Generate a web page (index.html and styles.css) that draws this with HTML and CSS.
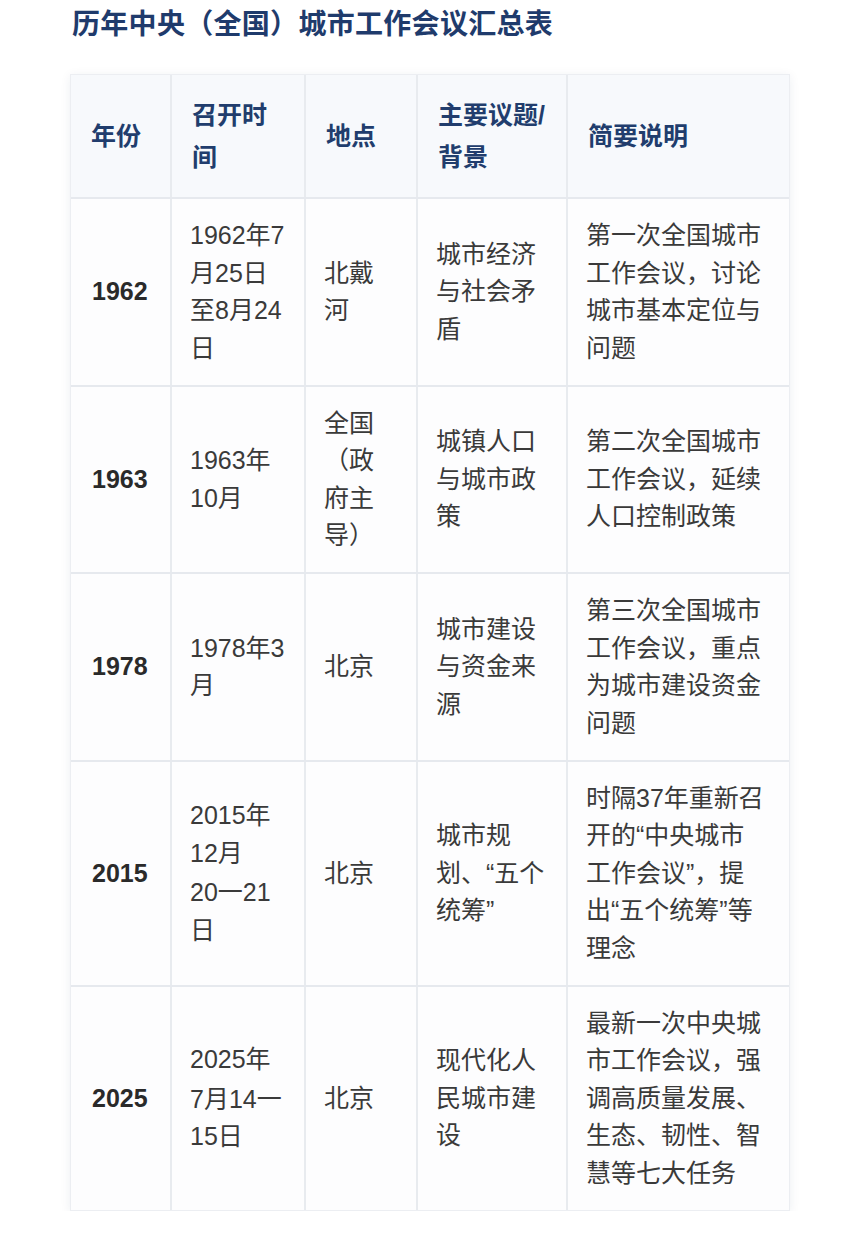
FILE: index.html
```html
<!DOCTYPE html>
<html lang="zh-CN">
<head>
<meta charset="utf-8">
<link rel="stylesheet" href="styles.css">
</head>
<body>
<div class="page">
  <h1 class="title">历年中央（全国）城市工作会议汇总表</h1>
  <div class="card">
    <table class="tbl">
      <colgroup>
        <col class="c1"><col class="c2"><col class="c3"><col class="c4"><col class="c5">
      </colgroup>
      <thead>
        <tr>
          <th>年份</th>
          <th>召开时<br>间</th>
          <th>地点</th>
          <th>主要议题/<br>背景</th>
          <th>简要说明</th>
        </tr>
      </thead>
      <tbody>
        <tr>
          <td class="yr">1962</td>
          <td>1962年7<br>月25日<br>至8月24<br>日</td>
          <td>北戴<br>河</td>
          <td>城市经济<br>与社会矛<br>盾</td>
          <td>第一次全国城市<br>工作会议，讨论<br>城市基本定位与<br>问题</td>
        </tr>
        <tr>
          <td class="yr">1963</td>
          <td>1963年<br>10月</td>
          <td>全国<br>（政<br>府主<br>导）</td>
          <td>城镇人口<br>与城市政<br>策</td>
          <td>第二次全国城市<br>工作会议，延续<br>人口控制政策</td>
        </tr>
        <tr>
          <td class="yr">1978</td>
          <td>1978年3<br>月</td>
          <td>北京</td>
          <td>城市建设<br>与资金来<br>源</td>
          <td>第三次全国城市<br>工作会议，重点<br>为城市建设资金<br>问题</td>
        </tr>
        <tr>
          <td class="yr">2015</td>
          <td>2015年<br>12月<br>20<span class="dash">一</span>21<br>日</td>
          <td>北京</td>
          <td>城市规<br>划、“五个<br>统筹”</td>
          <td>时隔37年重新召<br>开的“中央城市<br>工作会议”，提<br>出“五个统筹”等<br>理念</td>
        </tr>
        <tr>
          <td class="yr">2025</td>
          <td>2025年<br>7月14<span class="dash">一</span><br>15日</td>
          <td>北京</td>
          <td>现代化人<br>民城市建<br>设</td>
          <td>最新一次中央城<br>市工作会议，强<br>调高质量发展、<br>生态、韧性、智<br>慧等七大任务</td>
        </tr>
      </tbody>
    </table>
  </div>
</div>
</body>
</html>
```

FILE: styles.css
```css
html, body {
  margin: 0;
  padding: 0;
  background: #ffffff;
}
body {
  font-family: "Liberation Sans", "Noto Sans CJK SC", sans-serif;
  color: #333333;
}
.page {
  padding: 4px 0 0 70px;
  width: 722px;
}
.title {
  margin: 0 0 0 2px;
  font-family: "Noto Sans CJK SC", sans-serif;
  font-size: 28px;
  line-height: 36px;
  font-weight: 700;
  color: #1f3b6c;
  letter-spacing: 0.3px;
}
.card {
  margin-top: 34px;
  width: 718px;
  box-shadow: 0 2px 10px rgba(30, 50, 90, 0.08);
  border: 1px solid #eceef2;
  background: #fcfdfe;
}
.tbl {
  width: 100%;
  table-layout: fixed;
  border-collapse: collapse;
}
.c1 { width: 100px; }
.c2 { width: 134px; }
.c3 { width: 112px; }
.c4 { width: 150px; }
.c5 { width: 222px; }
.tbl th,
.tbl td {
  text-align: left;
  vertical-align: middle;
  white-space: nowrap;
  border-right: 2px solid #e8ebef;
  border-bottom: 2px solid #e6e9ee;
  font-size: 25px;
}
.tbl th:last-child,
.tbl td:last-child {
  border-right: none;
}
.tbl tr:last-child td {
  border-bottom: none;
}
.tbl th {
  padding: 19px 12px 19px 20px;
  line-height: 42px;
  font-weight: 700;
  color: #213d6d;
  background: #f7f9fc;
}
.tbl td {
  padding: 18px 12px 17.5px 18px;
  line-height: 37.5px;
  font-weight: 400;
  color: #3a3a3a;
  background: #fdfdfe;
}
.tbl td.yr {
  font-weight: 700;
  color: #2a2a2a;
  padding-left: 21px;
}
.dash {
  font-family: "Noto Sans CJK SC", sans-serif;
}
```
